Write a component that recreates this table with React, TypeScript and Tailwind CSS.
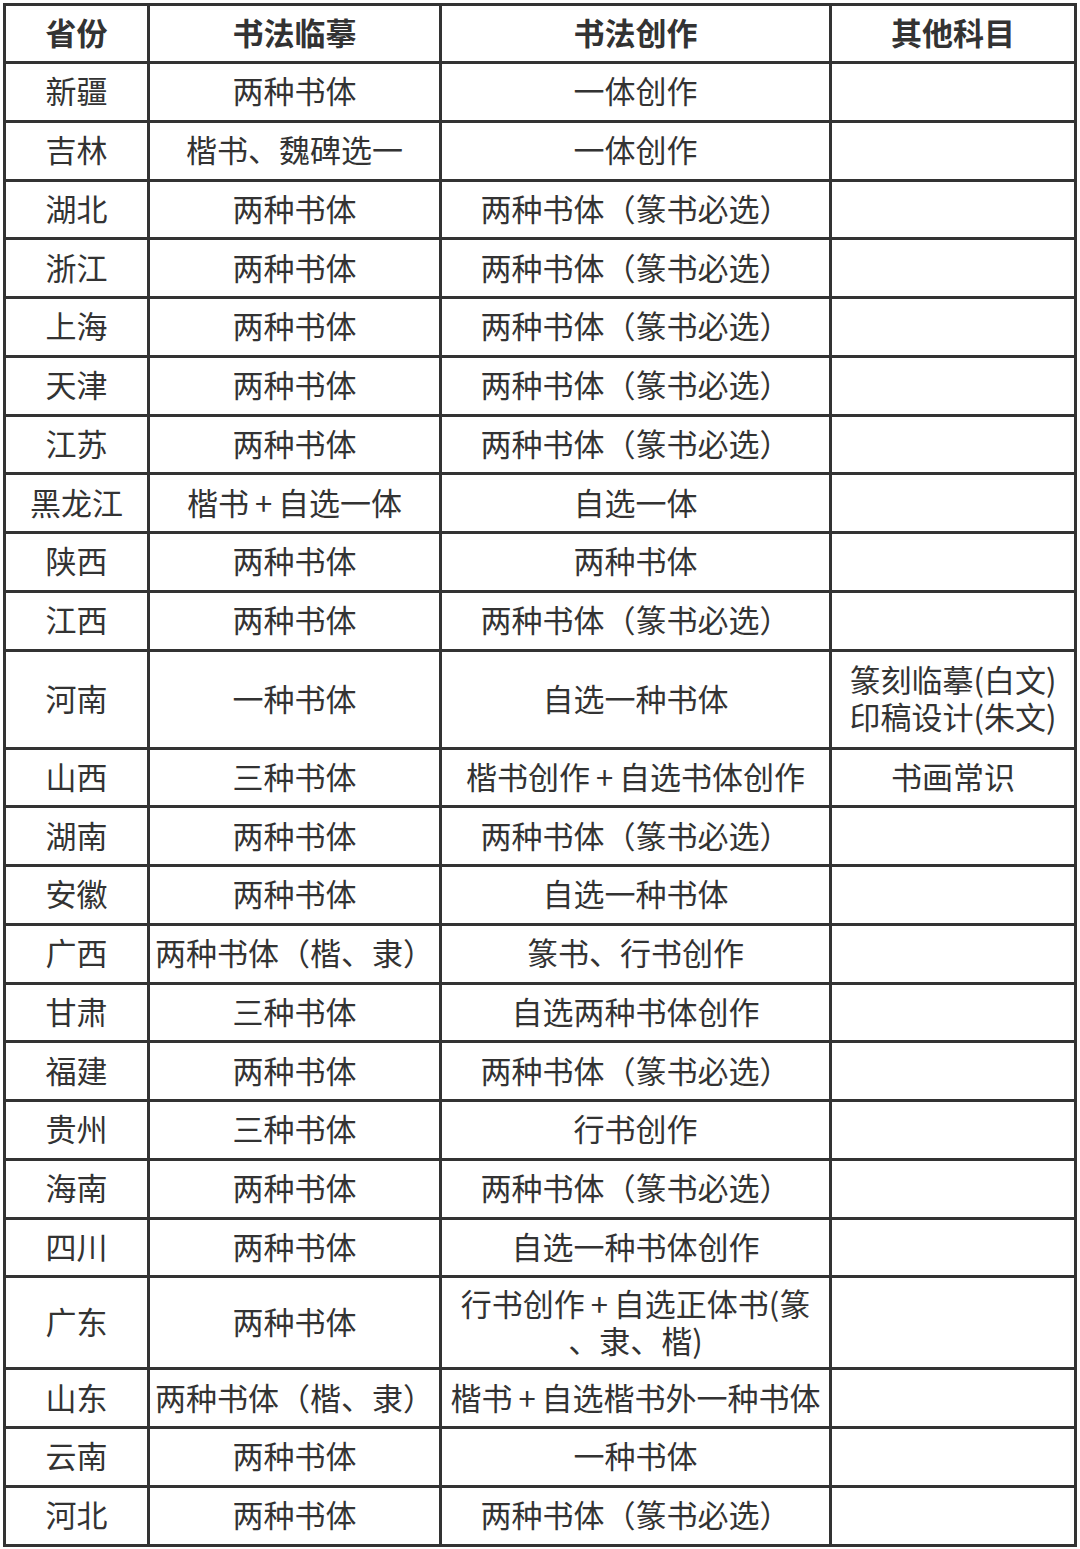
const P = () => <span className="px-[6px]">+</span>;

const rows: { p: string; a: React.ReactNode; b: React.ReactNode; c?: React.ReactNode; h?: string }[] = [
  { p: "新疆", a: "两种书体", b: "一体创作" },
  { p: "吉林", a: "楷书、魏碑选一", b: "一体创作" },
  { p: "湖北", a: "两种书体", b: "两种书体（篆书必选）" },
  { p: "浙江", a: "两种书体", b: "两种书体（篆书必选）" },
  { p: "上海", a: "两种书体", b: "两种书体（篆书必选）" },
  { p: "天津", a: "两种书体", b: "两种书体（篆书必选）" },
  { p: "江苏", a: "两种书体", b: "两种书体（篆书必选）" },
  {
    p: "黑龙江",
    a: (
      <>
        楷书<P />自选一体
      </>
    ),
    b: "自选一体",
  },
  { p: "陕西", a: "两种书体", b: "两种书体" },
  { p: "江西", a: "两种书体", b: "两种书体（篆书必选）" },
  {
    p: "河南",
    a: "一种书体",
    b: "自选一种书体",
    c: (
      <>
        <span className="block">篆刻临摹(白文)</span>
        <span className="block">印稿设计(朱文)</span>
      </>
    ),
    h: "tall1",
  },
  {
    p: "山西",
    a: "三种书体",
    b: (
      <>
        楷书创作<P />自选书体创作
      </>
    ),
    c: "书画常识",
  },
  { p: "湖南", a: "两种书体", b: "两种书体（篆书必选）" },
  { p: "安徽", a: "两种书体", b: "自选一种书体" },
  { p: "广西", a: "两种书体（楷、隶）", b: "篆书、行书创作" },
  { p: "甘肃", a: "三种书体", b: "自选两种书体创作" },
  { p: "福建", a: "两种书体", b: "两种书体（篆书必选）" },
  { p: "贵州", a: "三种书体", b: "行书创作" },
  { p: "海南", a: "两种书体", b: "两种书体（篆书必选）" },
  { p: "四川", a: "两种书体", b: "自选一种书体创作" },
  {
    p: "广东",
    a: "两种书体",
    b: (
      <>
        <span className="block">
          行书创作<P />自选正体书(篆
        </span>
        <span className="block">、隶、楷)</span>
      </>
    ),
    h: "tall2",
  },
  {
    p: "山东",
    a: "两种书体（楷、隶）",
    b: (
      <>
        楷书<P />自选楷书外一种书体
      </>
    ),
  },
  { p: "云南", a: "两种书体", b: "一种书体" },
  { p: "河北", a: "两种书体", b: "两种书体（篆书必选）" },
];

const cell =
  "flex items-center justify-center whitespace-nowrap border-r-[3px] border-b-[3px] border-[#333] pb-[4px] text-center";

function Cell({ h, bold, children }: { h: string; bold?: boolean; children?: React.ReactNode }) {
  return (
    <div className={`${cell} ${h} ${bold ? "font-bold" : ""}`}>
      <div>{children}</div>
    </div>
  );
}

export default function App() {
  return (
    <div
      className="h-[1549px] w-[1080px] bg-white pl-[3px] pt-[3px] text-[31px] leading-[37px] text-[#333]"
      style={{ fontFamily: '"Noto Sans CJK SC", "Noto Sans", sans-serif' }}
    >
      <div className="grid w-[1074px] grid-cols-[144px_292px_390px_245px] border-l-[3px] border-t-[3px] border-[#333]">
        {["省份", "书法临摹", "书法创作", "其他科目"].map((t) => (
          <Cell key={t} h="h-[58px]" bold>
            {t}
          </Cell>
        ))}
        {rows.map((r) => {
          const h = r.h === "tall1" ? "h-[98px]" : r.h === "tall2" ? "h-[92px]" : "h-[58.75px]";
          return (
            <div key={r.p} className="contents">
              <Cell h={h}>{r.p}</Cell>
              <Cell h={h}>{r.a}</Cell>
              <Cell h={h}>{r.b}</Cell>
              <Cell h={h}>{r.c}</Cell>
            </div>
          );
        })}
      </div>
    </div>
  );
}
